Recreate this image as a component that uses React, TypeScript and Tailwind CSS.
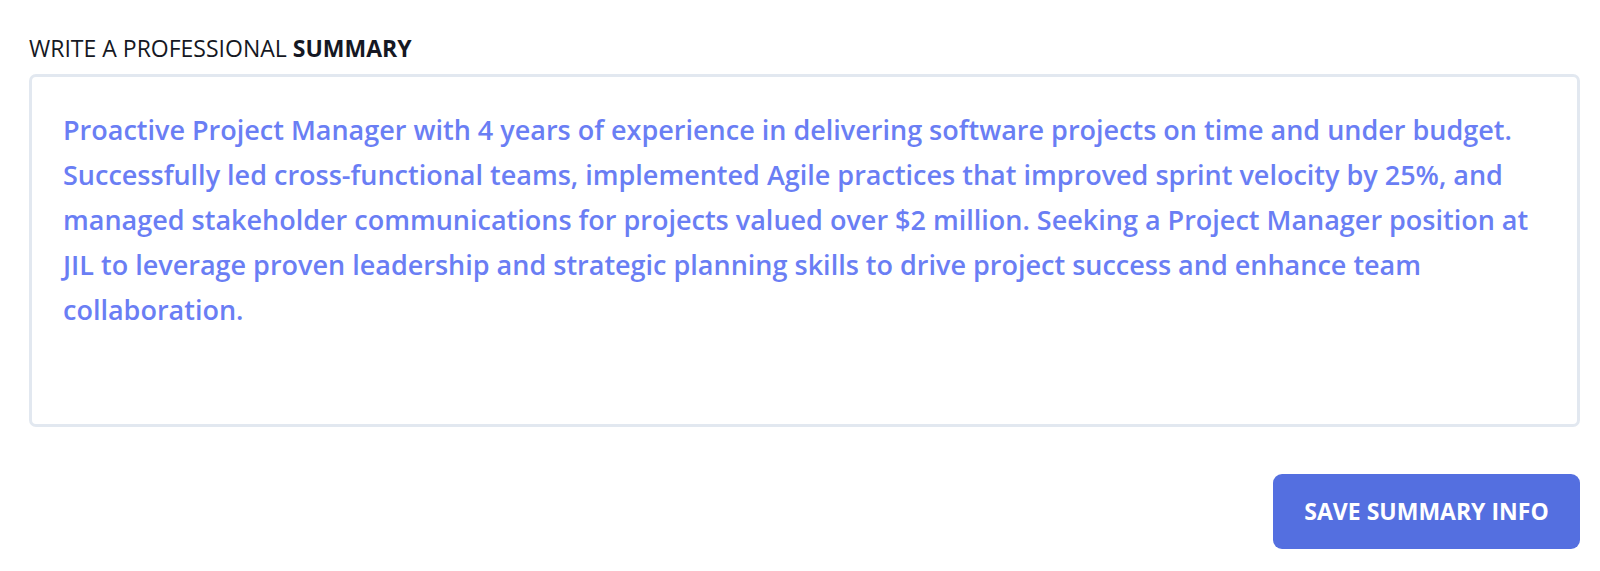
export default function App() {
  return (
    <div className="min-h-[571px] bg-white pl-[29px] pr-[20px] pt-[33px] font-['Open_Sans','Noto_Sans',sans-serif]">
      <label className="block text-[23px] leading-[30px] text-[#151823]">
        WRITE A PROFESSIONAL <span className="font-bold">SUMMARY</span>
      </label>

      <div className="mt-[11px] h-[353px] rounded-[7px] border-[3px] border-[#e2e8f0] px-[31px] pt-[30px]">
        <p className="max-w-[1480px] text-[27px] font-semibold leading-[45px] text-[#6a7ef4]">
          Proactive Project Manager with 4 years of experience in delivering software projects on time and under budget.
          Successfully led cross-functional teams, implemented Agile practices that improved sprint velocity by 25%, and
          managed stakeholder communications for projects valued over $2 million. Seeking a Project Manager position at
          JIL to leverage proven leadership and strategic planning skills to drive project success and enhance team
          collaboration.
        </p>
      </div>

      <div className="mt-[47px] flex justify-end">
        <button className="h-[75px] w-[307px] rounded-[9px] bg-[#546fe0] text-[23px] font-bold text-white">
          SAVE SUMMARY INFO
        </button>
      </div>
    </div>
  );
}
